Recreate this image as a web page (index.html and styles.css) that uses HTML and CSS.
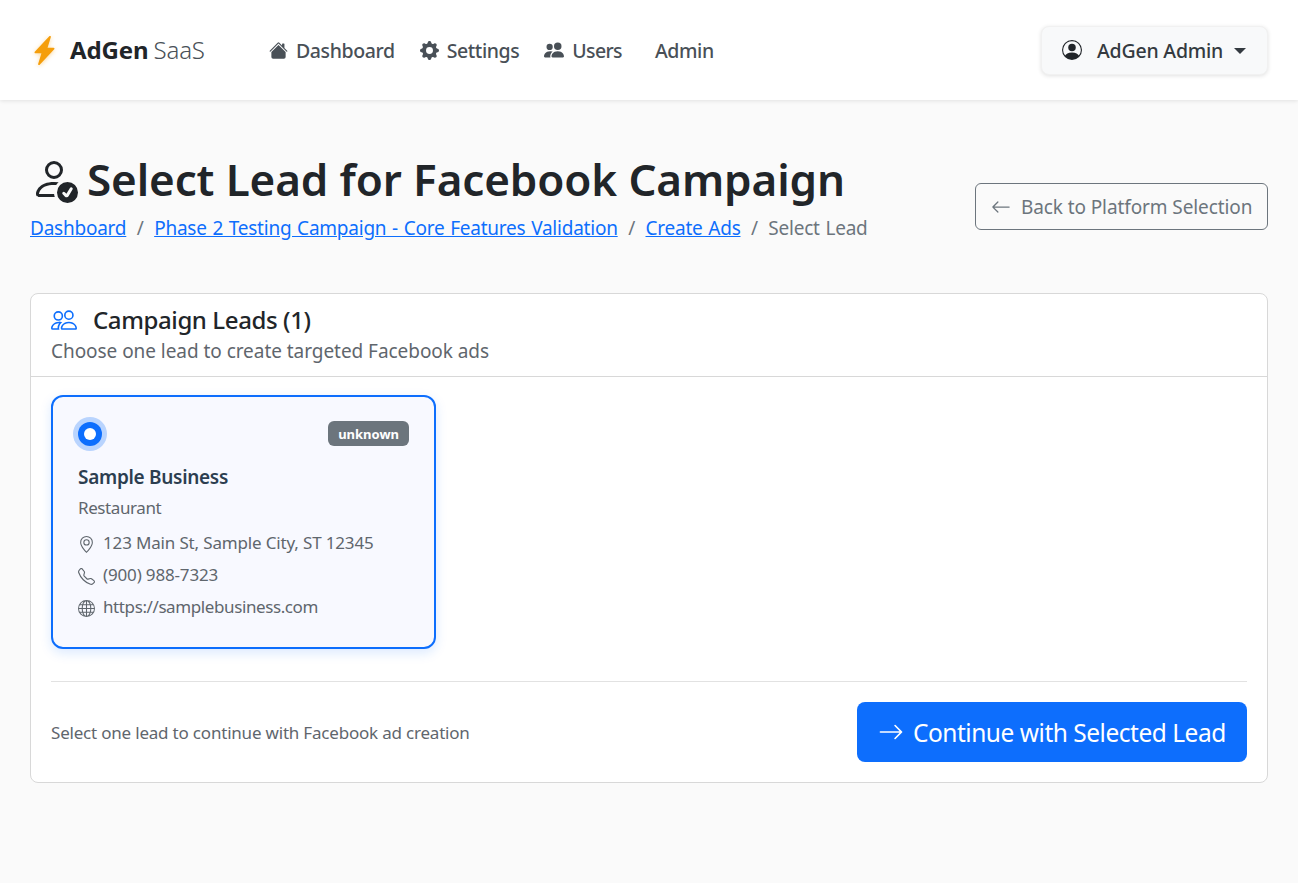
FILE: index.html
```html
<!DOCTYPE html>
<html lang="en">
<head>
<meta charset="utf-8">
<title>Select Lead</title>
<link rel="stylesheet" href="styles.css">
</head>
<body>
<nav class="navbar">
  <a class="brand">
    <svg class="brand-icon" viewBox="0 0 16 16"><path d="M11.251.068a.5.5 0 0 1 .227.58L9.677 6.5H13a.5.5 0 0 1 .364.843l-8 8.5a.5.5 0 0 1-.842-.49L6.323 9.5H3a.5.5 0 0 1-.364-.843l8-8.5a.5.5 0 0 1 .615-.09z"/></svg>
    <span class="brand-name">AdGen</span><span class="brand-sub">SaaS</span>
  </a>
  <ul class="nav-links">
    <li class="nav-dash"><svg class="nav-icon" viewBox="0 0 16 16"><path d="M8.707 1.5a1 1 0 0 0-1.414 0L.646 8.146a.5.5 0 0 0 .708.708L8 2.207l6.646 6.647a.5.5 0 0 0 .708-.708L13 5.793V2.5a.5.5 0 0 0-.5-.5h-1a.5.5 0 0 0-.5.5v1.293z"/><path d="m8 3.293 6 6V13.5a1.5 1.5 0 0 1-1.5 1.5h-9A1.5 1.5 0 0 1 2 13.5V9.293z"/></svg>Dashboard</li>
    <li class="nav-set"><svg class="nav-icon" viewBox="0 0 16 16"><path d="M9.405 1.05c-.413-1.4-2.397-1.4-2.81 0l-.1.34a1.464 1.464 0 0 1-2.105.872l-.31-.17c-1.283-.698-2.686.705-1.987 1.987l.169.311c.446.82.023 1.841-.872 2.105l-.34.1c-1.4.413-1.4 2.397 0 2.81l.34.1a1.464 1.464 0 0 1 .872 2.105l-.17.31c-.698 1.283.705 2.686 1.987 1.987l.311-.169a1.464 1.464 0 0 1 2.105.872l.1.34c.413 1.4 2.397 1.4 2.81 0l.1-.34a1.464 1.464 0 0 1 2.105-.872l.31.17c1.283.698 2.686-.705 1.987-1.987l-.169-.311a1.464 1.464 0 0 1 .872-2.105l.34-.1c1.4-.413 1.4-2.397 0-2.81l-.34-.1a1.464 1.464 0 0 1-.872-2.105l.17-.31c.698-1.283-.705-2.686-1.987-1.987l-.311.169a1.464 1.464 0 0 1-2.105-.872zM8 10.93a2.929 2.929 0 1 1 0-5.86 2.929 2.929 0 0 1 0 5.858z"/></svg>Settings</li>
    <li class="nav-users"><svg class="nav-icon nav-icon-wide" viewBox="0 0 16 16"><path d="M7 14s-1 0-1-1 1-4 5-4 5 3 5 4-1 1-1 1zm4-6a3 3 0 1 0 0-6 3 3 0 0 0 0 6m-5.784 6A2.24 2.24 0 0 1 5 13c0-1.355.68-2.75 1.936-3.72A6.3 6.3 0 0 0 5 9c-4 0-5 3-5 4s1 1 1 1zM4.5 8a2.5 2.5 0 1 0 0-5 2.5 2.5 0 0 0 0 5"/></svg>Users</li>
    <li class="nav-admin">Admin</li>
  </ul>
  <button class="user-btn">
    <svg class="user-icon" viewBox="0 0 16 16"><path d="M11 6a3 3 0 1 1-6 0 3 3 0 0 1 6 0"/><path fill-rule="evenodd" d="M0 8a8 8 0 1 1 16 0A8 8 0 0 1 0 8m8-7a7 7 0 0 0-5.468 11.37C3.242 11.226 4.805 10 8 10s4.757 1.225 5.468 2.37A7 7 0 0 0 8 1"/></svg>
    <span class="user-name">AdGen Admin</span>
    <i class="caret"></i>
  </button>
</nav>

<main class="page">
  <header class="page-head">
    <div>
      <h1 class="title">
        <svg class="title-icon" viewBox="0 0 16 16"><path d="M12.5 16a3.5 3.5 0 1 0 0-7 3.5 3.5 0 0 0 0 7m1.679-4.493-1.335 2.226a.75.75 0 0 1-1.174.144l-.774-.773a.5.5 0 0 1 .708-.708l.547.548 1.17-1.951a.5.5 0 1 1 .858.514M11 5a3 3 0 1 1-6 0 3 3 0 0 1 6 0M8 7a2 2 0 1 0 0-4 2 2 0 0 0 0 4"/><path d="M8.256 14a4.5 4.5 0 0 1-.229-1.004H3c.001-.246.154-.986.832-1.664C4.484 10.68 5.711 10 8 10q.39 0 .74.025c.226-.341.496-.65.804-.918Q8.844 9.002 8 9c-5 0-6 3-6 4s1 1 1 1z"/></svg>
        Select Lead for Facebook Campaign
      </h1>
      <ol class="crumbs">
        <li><a href="#">Dashboard</a></li>
        <li class="sep">/</li>
        <li><a href="#">Phase 2 Testing Campaign - Core Features Validation</a></li>
        <li class="sep">/</li>
        <li><a href="#">Create Ads</a></li>
        <li class="sep">/</li>
        <li class="crumb-current">Select Lead</li>
      </ol>
    </div>
    <a class="back-btn">
      <svg class="back-icon" viewBox="0 0 16 16"><path fill-rule="evenodd" d="M15 8a.5.5 0 0 0-.5-.5H2.707l3.147-3.146a.5.5 0 1 0-.708-.708l-4 4a.5.5 0 0 0 0 .708l4 4a.5.5 0 0 0 .708-.708L2.707 8.5H14.5A.5.5 0 0 0 15 8"/></svg>
      <span class="back-label">Back to Platform Selection</span>
    </a>
  </header>

  <section class="panel">
    <div class="panel-head">
      <h2 class="panel-title">
        <svg class="panel-icon" viewBox="0 0 16 16"><path d="M15 14s1 0 1-1-1-4-5-4-5 3-5 4 1 1 1 1zm-7.978-1L7 12.996c.001-.264.167-1.03.76-1.72C8.312 10.629 9.282 10 11 10c1.717 0 2.687.63 3.24 1.276.593.69.758 1.457.76 1.72l-.008.002-.014.002zM11 7a2 2 0 1 0 0-4 2 2 0 0 0 0 4m3-2a3 3 0 1 1-6 0 3 3 0 0 1 6 0M6.936 9.28a6 6 0 0 0-1.23-.247A7 7 0 0 0 5 9c-4 0-5 3-5 4q0 1 1 1h4.216A2.24 2.24 0 0 1 5 13c0-1.01.377-2.042 1.09-2.904.243-.294.526-.569.846-.816M4.92 10A5.5 5.5 0 0 0 4 13H1c0-.26.164-1.03.76-1.724.545-.636 1.492-1.256 3.16-1.275ZM1.5 5.5a3 3 0 1 1 6 0 3 3 0 0 1-6 0m3-2a2 2 0 1 0 0 4 2 2 0 0 0 0-4"/></svg>
        Campaign Leads (1)
      </h2>
      <p class="panel-sub">Choose one lead to create targeted Facebook ads</p>
    </div>
    <div class="panel-body">
      <article class="lead-card">
        <div class="lead-top">
          <span class="radio"></span>
          <span class="badge">unknown</span>
        </div>
        <h3 class="lead-name">Sample Business</h3>
        <p class="lead-type">Restaurant</p>
        <div class="lead-row lead-row-digits">
          <svg class="row-icon" viewBox="0 0 16 16"><path d="M12.166 8.94c-.524 1.062-1.234 2.12-1.96 3.07A32 32 0 0 1 8 14.58a32 32 0 0 1-2.206-2.57c-.726-.95-1.436-2.008-1.96-3.07C3.304 7.867 3 6.862 3 6a5 5 0 0 1 10 0c0 .862-.305 1.867-.834 2.94M8 16s6-5.686 6-10A6 6 0 0 0 2 6c0 4.314 6 10 6 10"/><path d="M8 8a2 2 0 1 1 0-4 2 2 0 0 1 0 4m0 1a3 3 0 1 0 0-6 3 3 0 0 0 0 6"/></svg>
          <span>123 Main St, Sample City, ST 12345</span>
        </div>
        <div class="lead-row lead-row-digits">
          <svg class="row-icon" viewBox="0 0 16 16"><path d="M3.654 1.328a.678.678 0 0 0-1.015-.063L1.605 2.3c-.483.484-.661 1.169-.45 1.77a17.6 17.6 0 0 0 4.168 6.608 17.6 17.6 0 0 0 6.608 4.168c.601.211 1.286.033 1.77-.45l1.034-1.034a.678.678 0 0 0-.063-1.015l-2.307-1.794a.68.68 0 0 0-.58-.122l-2.19.547a1.75 1.75 0 0 1-1.657-.459L5.482 8.062a1.75 1.75 0 0 1-.46-1.657l.548-2.19a.68.68 0 0 0-.122-.58zM1.884.511a1.745 1.745 0 0 1 2.612.163L6.29 2.98c.329.423.445.974.315 1.494l-.547 2.19a.68.68 0 0 0 .178.643l2.457 2.457a.68.68 0 0 0 .644.178l2.189-.547a1.75 1.75 0 0 1 1.494.315l2.306 1.794c.829.645.905 1.87.163 2.611l-1.034 1.034c-.74.74-1.846 1.065-2.877.702a18.6 18.6 0 0 1-7.01-4.42 18.6 18.6 0 0 1-4.42-7.009c-.362-1.03-.037-2.137.703-2.877z"/></svg>
          <span>(900) 988-7323</span>
        </div>
        <div class="lead-row">
          <svg class="row-icon" viewBox="0 0 16 16"><path d="M0 8a8 8 0 1 1 16 0A8 8 0 0 1 0 8m7.5-6.923c-.67.204-1.335.82-1.887 1.855A8 8 0 0 0 5.145 4H7.5zM4.09 4a9.3 9.3 0 0 1 .64-1.539 7 7 0 0 1 .597-.933A7.03 7.03 0 0 0 2.255 4zm-.582 3.5c.03-.877.138-1.718.312-2.5H1.674a7 7 0 0 0-.656 2.5zM4.847 5a12.5 12.5 0 0 0-.338 2.5H7.5V5zM8.5 5v2.5h2.99a12.5 12.5 0 0 0-.337-2.5zM4.51 8.5a12.5 12.5 0 0 0 .337 2.5H7.5V8.5zm3.99 0V11h2.653c.187-.765.306-1.608.338-2.5zM5.145 12q.208.58.468 1.068c.552 1.035 1.218 1.65 1.887 1.855V12zm.182 2.472a7 7 0 0 1-.597-.933A9.3 9.3 0 0 1 4.09 12H2.255a7 7 0 0 0 3.072 2.472M3.82 11a13.7 13.7 0 0 1-.312-2.5h-2.49c.062.89.291 1.733.656 2.5zm6.853 3.472A7 7 0 0 0 13.745 12H11.91a9.3 9.3 0 0 1-.64 1.539 7 7 0 0 1-.597.933M8.5 12v2.923c.67-.204 1.335-.82 1.887-1.855q.26-.487.468-1.068zm3.68-1h2.146c.365-.767.594-1.61.656-2.5h-2.49a13.7 13.7 0 0 1-.312 2.5m2.802-3.5a7 7 0 0 0-.656-2.5H12.18c.174.782.282 1.623.312 2.5zM11.27 2.461c.247.464.462.98.64 1.539h1.835a7 7 0 0 0-3.072-2.472c.218.284.418.598.597.933M10.855 4a8 8 0 0 0-.468-1.068C9.835 1.897 9.17 1.282 8.5 1.077V4z"/></svg>
          <span>https://samplebusiness.com</span>
        </div>
      </article>
      <div class="panel-foot">
        <span class="foot-note">Select one lead to continue with Facebook ad creation</span>
        <button class="cta">
          <svg class="cta-icon" viewBox="0 0 16 16"><path fill-rule="evenodd" d="M1 8a.5.5 0 0 1 .5-.5h11.793l-3.147-3.146a.5.5 0 0 1 .708-.708l4 4a.5.5 0 0 1 0 .708l-4 4a.5.5 0 0 1-.708-.708L13.293 8.5H1.5A.5.5 0 0 1 1 8"/></svg>
          <span>Continue with Selected Lead</span>
        </button>
      </div>
    </div>
  </section>
</main>
</body>
</html>
```
FILE: styles.css
```css
* { box-sizing: border-box; }
html, body { margin: 0; padding: 0; }
body {
  min-height: 883px;
  background: #fafafa;
  color: #212529;
  font-family: "Noto Sans", "Open Sans", sans-serif;
  font-size: 18px;
  line-height: 1.5;
  overflow: hidden;
}
svg { fill: currentColor; display: block; flex: none; }

.navbar {
  height: 100px;
  display: flex;
  align-items: center;
  padding: 0 30px;
  background: #fff;
  box-shadow: 0 1px 4px rgba(0, 0, 0, .1);
}
.brand { display: flex; align-items: center; width: 239px; font-size: 24px; white-space: nowrap; }
.brand-icon { width: 29px; height: 29px; color: #f59e0b; margin-right: 11px; filter: drop-shadow(0 1px 2px rgba(245, 158, 11, .4)); }
.brand-name { font-weight: 700; color: #212529; letter-spacing: -.1px; }
.brand-sub { font-weight: 300; color: #495057; margin-left: 5px; letter-spacing: -.2px; }
.nav-links { display: flex; align-items: center; list-style: none; margin: 2px 0 0; padding: 0; font-size: 19.5px; font-weight: 500; color: #495057; letter-spacing: -.4px; }
.nav-links li { display: flex; align-items: center; }
.nav-icon { width: 19px; height: 19px; margin: -2px 8px 0 0; }
.nav-icon-wide { width: 20px; height: 20px; }
.nav-dash { margin-right: 25px; }
.nav-set { margin-right: 25px; }
.nav-users { margin-right: 33px; letter-spacing: -.65px; }
.user-btn {
  margin-left: auto;
  width: 227px;
  height: 49px;
  display: flex;
  align-items: center;
  padding: 0 20px;
  background: #f8f9fa;
  border: 1px solid #f1f1f1;
  border-radius: 8px;
  box-shadow: 0 1px 4px rgba(0, 0, 0, .12);
  font: 500 19.5px "Noto Sans", sans-serif;
  color: #343a40;
  letter-spacing: -.2px;
  white-space: nowrap;
}
.user-name { margin-top: 1px; }
.user-icon { width: 20px; height: 20px; margin-right: 15px; color: #212529; }
.caret { width: 0; height: 0; margin: 1px 0 0 11px; border-top: 6px solid #343a40; border-left: 6px solid transparent; border-right: 6px solid transparent; }

.page { padding: 0 30px; }
.page-head { display: flex; justify-content: space-between; align-items: flex-start; padding-top: 49px; height: 193px; }
.title { display: flex; align-items: center; gap: 9px; margin: 0; font-size: 44px; font-weight: 600; line-height: 60px; letter-spacing: -.12px; color: #212529; }
.title-icon { width: 48px; height: 48px; }
.crumbs { display: flex; list-style: none; margin: 5px 0 0; padding: 0; font-size: 19px; line-height: 28px; letter-spacing: -.23px; word-spacing: 1px; }
.crumbs a { color: #0d6efd; text-decoration: underline; }
.sep { color: #6c757d; padding: 0 10.5px; }
.crumb-current { color: #6c757d; }
.back-btn {
  display: flex;
  align-items: center;
  gap: 10px;
  margin-top: 34px;
  width: 293px;
  height: 47px;
  padding: 0 15px;
  border: 1px solid #6c757d;
  border-radius: 6px;
  color: #6c757d;
  font-size: 19px;
  white-space: nowrap;
  letter-spacing: -.1px;
}
.back-label { margin-top: 1px; }
.back-icon { width: 20px; height: 20px; }

.panel { background: #fff; border: 1px solid #d8d8d8; border-radius: 8px; height: 490px; }
.panel-head { height: 83px; padding: 8px 20px 0; border-bottom: 1px solid #d8d8d8; }
.panel-title { display: flex; align-items: center; gap: 16px; margin: 0; font-size: 24px; font-weight: 500; line-height: 36px; letter-spacing: -.4px; }
.panel-icon { width: 26px; height: 26px; color: #0d6efd; }
.panel-sub { margin: 0; font-size: 19px; line-height: 27px; color: #5f666d; letter-spacing: -.05px; }
.panel-body { padding: 18px 20px 0; }

.lead-card {
  width: 385px;
  height: 254px;
  padding: 17px 25px;
  background: #f8f9ff;
  border: 2px solid #0d6efd;
  border-radius: 12px;
  box-shadow: 0 4px 12px rgba(13, 110, 253, .15);
}
.lead-top { display: flex; justify-content: space-between; align-items: center; height: 40px; }
.radio { position: relative; width: 24px; height: 24px; background: #0d6efd; border-radius: 50%; box-shadow: 0 0 0 5px #b9d4fe; }
.radio::after { content: ""; position: absolute; inset: 6px; background: #fff; border-radius: 50%; }
.badge { margin-bottom: 2px; padding: 0 10px; height: 25px; line-height: 26px; background: #6c757d; color: #fff; border-radius: 6px; font-size: 13px; font-weight: 700; }
.lead-name { margin: 9px 0 0; font-size: 19px; font-weight: 600; line-height: 28px; color: #2c3e50; letter-spacing: -.3px; }
.lead-type { margin: 4px 0 0; font-size: 17px; line-height: 26px; color: #5f666d; letter-spacing: -.4px; }
.lead-row { display: flex; align-items: center; gap: 8px; height: 32px; font-size: 17px; color: #5f666d; letter-spacing: -.4px; }
.lead-row-digits { letter-spacing: -.16px; }
.lead-type + .lead-row { margin-top: 6px; }
.row-icon { width: 17px; height: 17px; margin-top: 2px; }

.panel-foot { display: flex; justify-content: space-between; align-items: center; margin-top: 32px; padding-top: 20px; border-top: 1px solid #e2e2e2; }
.foot-note { margin-top: 2px; font-size: 17px; color: #5f666d; letter-spacing: -.2px; }
.cta {
  display: flex;
  align-items: center;
  gap: 9px;
  width: 390px;
  height: 60px;
  padding: 0 21px;
  background: #0d6efd;
  border: 0;
  border-radius: 8px;
  color: #fff;
  font: 400 24.5px "Noto Sans", sans-serif;
  letter-spacing: -.48px;
  white-space: nowrap;
}
.cta-icon { width: 26px; height: 26px; }
```
